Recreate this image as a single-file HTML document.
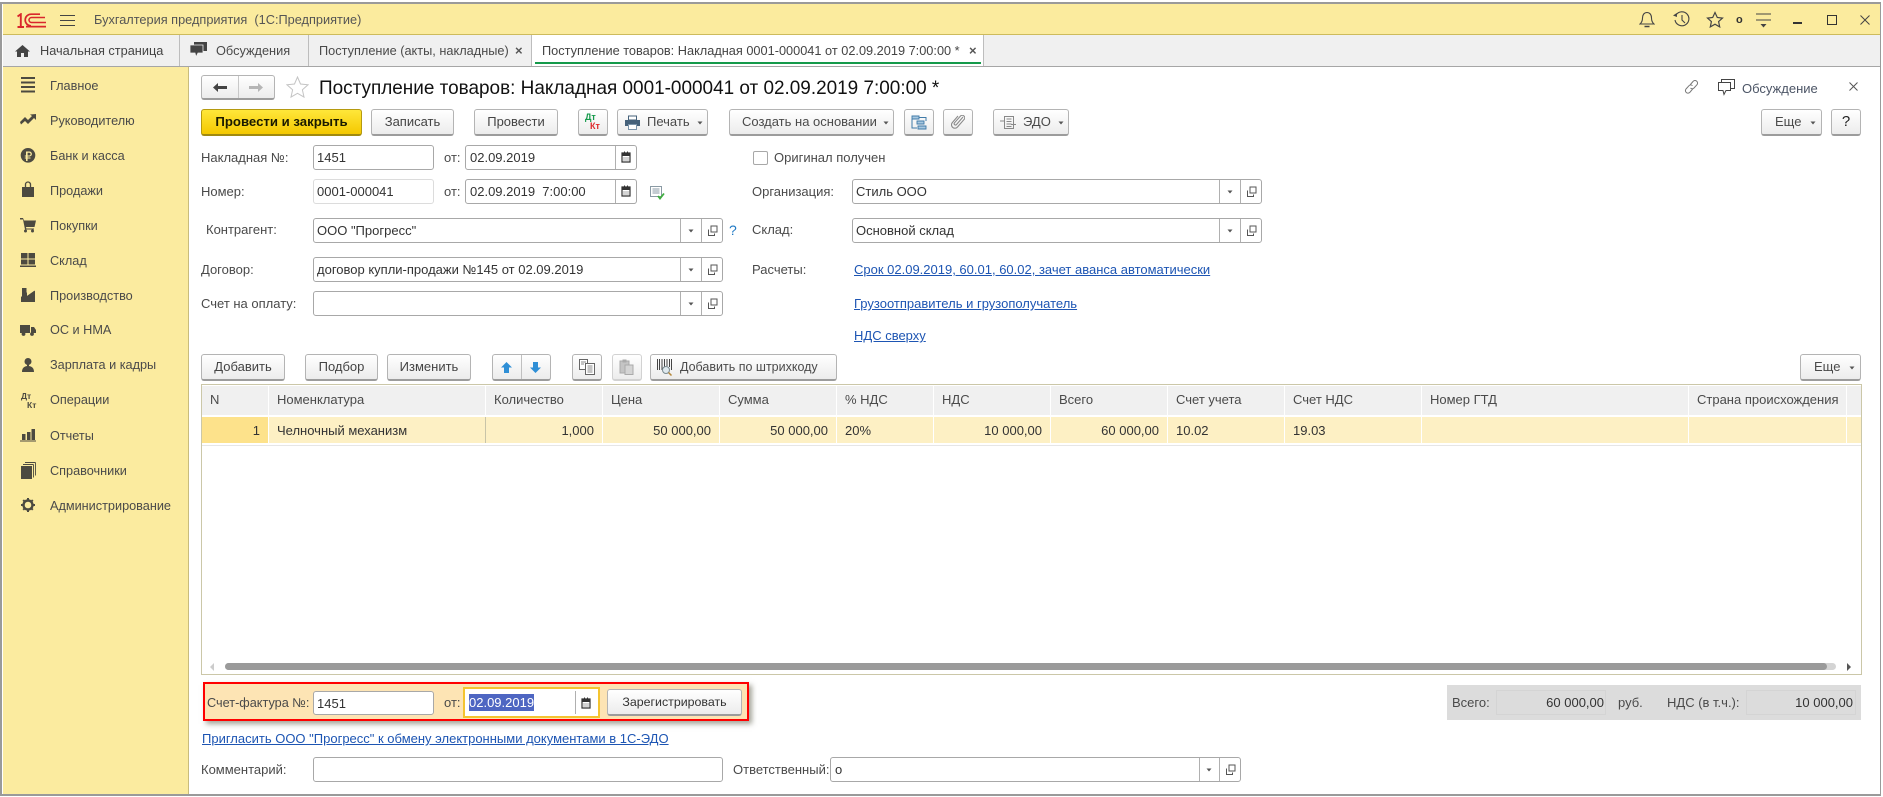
<!DOCTYPE html>
<html lang="ru"><head><meta charset="utf-8"><title>Поступление товаров</title>
<style>
html,body{margin:0;padding:0;background:#fff}
#p{position:relative;width:1883px;height:797px;overflow:hidden;background:#fff;font:13px/20px "Liberation Sans",Arial,sans-serif;color:#4a4a4a}
#p div,#p a,#p svg{position:absolute;box-sizing:border-box}
.t{white-space:pre;height:20px}
.s{font-size:12.7px}
.tb{font-size:12.75px}
.r{text-align:right;transform:translateX(-100%)}
.b{background:linear-gradient(#fff,#ececec);border:1px solid #b4b4b4;border-bottom:2px solid #9c9c9c;border-radius:3px;text-align:center;line-height:23px;white-space:pre;color:#444}
.i{background:#fff;border:1px solid #a8a8a8;border-radius:3px;height:25px;color:#333;line-height:24px;padding-left:3px;white-space:pre}
.v{width:1px;background:#b0b0b0}
a.l{color:#1d55b3;text-decoration:underline;white-space:pre;line-height:20px;height:20px}
.h{background:#f0f0f0;height:29px;top:386px;line-height:28px;padding-left:9px;color:#4a4a4a;white-space:pre;overflow:hidden}
.c{background:#fdf0c4;height:26px;top:417px;line-height:28px;color:#333;white-space:pre}
</style></head><body><div id="p">
<svg width="0" height="0" style="display:none">
<symbol id="cal" viewBox="0 0 10 12"><path d="M1 2h8v9H1z" fill="none" stroke="#333" stroke-width="1.2"/><path d="M1 2h8v3H1zM3 .5h1v2H3zM6 .5h1v2H6z" fill="#333"/><path d="M2.500 6.500h1v1h-1zM4.500 6.500h1v1h-1zM6.500 6.500h1v1h-1zM2.500 8.500h1v1h-1zM4.500 8.500h1v1h-1zM6.500 8.500h1v1h-1z" fill="#555"/></symbol>
<symbol id="tri" viewBox="0 0 6 4"><path d="M.5 .5h5L3 3.500z" fill="#555"/></symbol>
<symbol id="op" viewBox="0 0 11 12"><path d="M4 1h6v6H4z" fill="#fff" stroke="#555"/><path d="M1.500 4.500v6h6V8.500" fill="none" stroke="#555"/></symbol>
</svg>

<!-- window frame -->
<div style="left:0;top:2px;width:1881px;height:794px;border:2px solid #9a9a9a;border-right-width:1px"></div>

<!-- title bar -->
<div style="left:3px;top:4px;width:1877px;height:31px;background:#fbeb9e;border-bottom:1px solid #cdbb5c"></div>
<svg style="left:17px;top:13px" width="30" height="15" viewBox="0 0 30 15"><g fill="none" stroke="#d9262c"><path d="M.5 3.500 3.800 1.200V14M.5 14H7" stroke-width="1.900"/><path d="M23 1.200H14a5.800 5.800 0 0 0 0 11.600" stroke-width="1.700"/><path d="M28 4.500H14.500a2.500 2.500 0 0 0 0 5H29" stroke-width="1.500"/><path d="M9 13.600H29" stroke-width="1.700"/></g></svg>
<svg style="left:60px;top:15px" width="15" height="11"><path d="M0 .5h15M0 5.500h15M0 10.500h15" stroke="#444"/></svg>
<div class="t tb" style="left:94px;top:10px;color:#555">Бухгалтерия предприятия  (1С:Предприятие)</div>
<svg style="left:1639px;top:11px" width="16" height="18" viewBox="0 0 16 18"><path d="M8 1.500c-3 0-4.500 2.500-4.500 5.500 0 3-1.300 5-2.500 6h14c-1.200-1-2.500-3-2.500-6 0-3-1.500-5.500-4.500-5.500z" fill="none" stroke="#444" stroke-width="1.100"/><path d="M5.500 15.500h5" stroke="#444" stroke-width="1.500"/></svg>
<svg style="left:1672px;top:11px" width="19" height="17" viewBox="0 0 19 17"><path d="M4 4a7 7 0 1 1-1 5" fill="none" stroke="#444" stroke-width="1.100"/><path d="M1 4.500 4.800 2 5 6z" fill="#444"/><path d="M10 4v5l3 3" fill="none" stroke="#444" stroke-width="1.100"/></svg>
<svg style="left:1706px;top:11px" width="18" height="17" viewBox="0 0 18 17"><path d="M9 1.500l2.300 5 5.200.6-3.900 3.500 1.100 5.300L9 13.200l-4.700 2.700 1.100-5.300L1.500 7.100l5.200-.6z" fill="none" stroke="#444" stroke-width="1.200"/></svg>
<div class="t" style="left:1736px;top:10px;font-size:11px;color:#333;font-weight:bold">о</div>
<svg style="left:1756px;top:13px" width="15" height="15" viewBox="0 0 15 15"><path d="M0 1h15M0 7h15" stroke="#444"/><path d="M4.500 11h6L7.500 14.500z" fill="#444"/></svg>
<div style="left:1793px;top:22px;width:9px;height:2px;background:#333"></div>
<div style="left:1827px;top:15px;width:10px;height:10px;border:1.500px solid #333"></div>
<svg style="left:1860px;top:15px" width="10" height="10"><path d="M.5 .5l9 9M9.500 .5l-9 9" stroke="#444"/></svg>

<!-- tab bar -->
<div style="left:3px;top:35px;width:1877px;height:32px;background:#f0f0f0;border-bottom:1px solid #a6a6a6"></div>
<div style="left:179px;top:35px;width:1px;height:31px;background:#bdbdbd"></div>
<div style="left:308px;top:35px;width:1px;height:31px;background:#bdbdbd"></div>
<div style="left:531px;top:35px;width:1px;height:31px;background:#bdbdbd"></div>
<div style="left:532px;top:35px;width:452px;height:31px;background:#fff;border-right:1px solid #bdbdbd"></div>
<div style="left:535px;top:62px;width:446px;height:2px;background:#159a4b"></div>
<svg style="left:15px;top:45px" width="15" height="12" viewBox="0 0 15 12"><path d="M7.500 0 15 6.500h-2V12H9V8H6v4H2V6.500H0z" fill="#444"/></svg>
<div class="t tb" style="left:40px;top:41px;color:#444">Начальная страница</div>
<svg style="left:190px;top:42px" width="17" height="16" viewBox="0 0 17 16"><path d="M4 0h13v9H4z" fill="#444"/><path d="M0 3h13v8H8l-2 4-1-4H0z" fill="#444" stroke="#f0f0f0" stroke-width=".8"/></svg>
<div class="t tb" style="left:216px;top:41px">Обсуждения</div>
<div class="t tb" style="left:319px;top:41px">Поступление (акты, накладные)</div>
<div class="t" style="left:515px;top:41px;font-weight:bold;font-size:13px;color:#555">×</div>
<div class="t tb" style="left:542px;top:41px;color:#444">Поступление товаров: Накладная 0001-000041 от 02.09.2019 7:00:00 *</div>
<div class="t" style="left:969px;top:41px;font-weight:bold;font-size:13px;color:#555">×</div>

<!-- sidebar -->
<div style="left:3px;top:67px;width:186px;height:727px;background:#fbeb9f;border-right:1px solid #c9bc7c"></div>
<div class="t s" style="left:50px;top:76px">Главное</div>
<div class="t s" style="left:50px;top:111px">Руководителю</div>
<div class="t s" style="left:50px;top:146px">Банк и касса</div>
<div class="t s" style="left:50px;top:181px">Продажи</div>
<div class="t s" style="left:50px;top:216px">Покупки</div>
<div class="t s" style="left:50px;top:251px">Склад</div>
<div class="t s" style="left:50px;top:286px">Производство</div>
<div class="t s" style="left:50px;top:320px">ОС и НМА</div>
<div class="t s" style="left:50px;top:355px">Зарплата и кадры</div>
<div class="t s" style="left:50px;top:390px">Операции</div>
<div class="t s" style="left:50px;top:426px">Отчеты</div>
<div class="t s" style="left:50px;top:461px">Справочники</div>
<div class="t s" style="left:50px;top:496px">Администрирование</div>
<svg style="left:20px;top:76px" width="16" height="450" viewBox="0 0 16 450" fill="#4c4a40">
<!-- lines -->
<path d="M1 1h14v2H1zM1 5.500h14v2H1zM1 10h14v2H1zM1 14.500h14v2H1z"/>
<!-- trend -->
<path d="M0 46l5-5 3 3 4-4-2-1.500 6-.5v6l-2-2-6 6-3-3-4 3.500z"/>
<!-- ruble -->
<path fill-rule="evenodd" d="M8 72a7.300 7.300 0 1 1 0 14.600A7.300 7.300 0 0 1 8 72zM6 75.500v4H4.800v1H6v1H4.800v1H6v2.500h1.600v-2.500H10.500v-1H7.600v-1H9.400a2.500 2.500 0 0 0 0-5zM7.600 76.800H9.200a1.200 1.200 0 0 1 0 2.700H7.600z"/>
<!-- bag -->
<path d="M2 111h12v10H2z"/><path d="M5.500 112v-3.500a2.500 2.500 0 0 1 5 0v3.500" fill="none" stroke="#4c4a40" stroke-width="1.300"/>
<!-- cart -->
<path d="M0 142h3l1 2.500h12l-1.500 6.500H6l.3 1.500H14v1H5l-2-10H0z"/><circle cx="5.500" cy="155" r="1.500"/><circle cx="12.500" cy="155" r="1.500"/>
<!-- warehouse -->
<path d="M1 177h6.500v5.500H1zM8.500 177H15v5.500H8.500zM1 183.500h6.500v5H1zM8.500 183.500H15v5H8.500zM0 189.500h16v1.500H0z"/>
<!-- factory -->
<path d="M2 212h4.500v6L2 221zM1 226v-5l6-4.500v3.500l7-5v1l1 0v10z"/><path d="M1 221l6-4.500v3.500l8-5.500V226H1z"/>
<!-- truck -->
<path d="M0 249h10v8H0zM11 251h3l2 3v3H11z"/><circle cx="3.500" cy="258" r="1.900"/><circle cx="12" cy="258" r="1.900"/>
<!-- person -->
<circle cx="8" cy="285.500" r="3.500"/><path d="M7 288h2v2c3 .5 5 2 5 6H2c0-4 2-5.500 5-6z"/>
<!-- chart -->
<path d="M2 358h3.500v6H2zM7 356h3.500v8H7zM11.500 353h3.500v11h-3.500zM0 364.500h16v1H0z"/>
<!-- books -->
<path d="M1 390h11v13H1z"/><path d="M13.500 388.500v13M15.500 386.500v13M3 388.500h10.500M5 386.500h10.500" fill="none" stroke="#4c4a40" stroke-width=".9"/>
<!-- gear -->
<g transform="translate(8 429)"><circle r="4.500" fill="none" stroke="#4c4a40" stroke-width="2.400"/><path d="M-1 -7h2v3h-2zM-1 4h2v3h-2zM-7 -1h3v2h-3zM4 -1h3v2H4zM-5.500 -4.200l1.400-1.400 2 2-1.400 1.400zM2.100 3.500l1.400-1.400 2 2-1.400 1.400zM4.100 -5.600l1.400 1.400-2 2-1.400-1.400zM-3.500 2.100l1.400 1.400-2 2-1.400-1.400z"/></g>
</svg>
<div class="t" style="left:21px;top:391px;font-size:8.500px;font-weight:bold;line-height:10px;color:#4c4a40;height:10px">Дт</div>
<div class="t" style="left:27px;top:400px;font-size:8.500px;font-weight:bold;line-height:10px;color:#4c4a40;height:10px">Кт</div>

<!-- nav and title -->
<div class="b" style="left:201px;top:75px;width:74px;height:25px"></div>
<div style="left:238px;top:76px;width:1px;height:22px;background:#c8c8c8"></div>
<svg style="left:213px;top:83px" width="14" height="9"><path d="M0 4.500L5 0v3h9v3H5v3z" fill="#444"/></svg>
<svg style="left:249px;top:83px" width="14" height="9"><path d="M14 4.500L9 0v3H0v3h9v3z" fill="#b5b5b5"/></svg>
<svg style="left:286px;top:76px" width="23" height="22" viewBox="0 0 23 22"><path d="M11.500 1l3 7 7.500.8-5.600 5 1.600 7.300-6.500-3.800-6.500 3.800 1.600-7.300-5.600-5L8.500 8z" fill="#fff" stroke="#c4c4c4"/></svg>
<div class="t" style="left:319px;top:78px;font-size:18.950px;color:#111;line-height:22px;height:22px">Поступление товаров: Накладная 0001-000041 от 02.09.2019 7:00:00 *</div>
<svg style="left:1683px;top:79px" width="17" height="16" viewBox="0 0 17 16"><g fill="none" stroke="#777" stroke-width="1"><path d="M7 6l3-3.500a2.500 2.500 0 0 1 4 3.200l-3 3.300a2.500 2.500 0 0 1-3.500 0"/><path d="M10 9.500l-3 3.700a2.500 2.500 0 0 1-4-3.200l3-3.300a2.500 2.500 0 0 1 3.500 0"/></g></svg>
<svg style="left:1718px;top:79px" width="17" height="17" viewBox="0 0 17 17"><g fill="none" stroke="#444"><path d="M3.500 3V.5h13v9H13"/><path d="M.5 3.500h12v8H8l-2 4-1-4H.5z" fill="#fff"/></g></svg>
<div class="t" style="left:1742px;top:79px;color:#4c5566">Обсуждение</div>
<svg style="left:1849px;top:82px" width="9" height="9"><path d="M.5 .5l8 8M8.500 .5l-8 8" stroke="#555"/></svg>

<!-- command bar -->
<div class="b" style="left:201px;top:109px;width:161px;height:27px;background:linear-gradient(#ffe73a,#f4c800);border:1px solid #b59a10;border-bottom:2px solid #a08a10;font-weight:bold;color:#1a1a00;line-height:24px;font-size:13.200px">Провести и закрыть</div>
<div class="b" style="left:371px;top:109px;width:83px;height:27px;line-height:24px">Записать</div>
<div class="b" style="left:474px;top:109px;width:84px;height:27px;line-height:24px">Провести</div>
<div class="b" style="left:578px;top:109px;width:30px;height:27px"></div>
<div class="t" style="left:585px;top:113px;font-size:9px;font-weight:bold;color:#159a4b;line-height:9px;height:9px">Дт</div>
<div class="t" style="left:590px;top:122px;font-size:9px;font-weight:bold;color:#dd2b2b;line-height:9px;height:9px">Кт</div>
<div class="b" style="left:617px;top:109px;width:91px;height:27px"></div>
<svg style="left:625px;top:115px" width="15" height="15" viewBox="0 0 15 15"><path d="M3.500 1h8v4h-8z" fill="#fff" stroke="#45617a"/><path d="M0 5h15v6h-3V9H3v2H0z" fill="#45617a"/><path d="M3.500 9.500h8v5h-8z" fill="#fff" stroke="#7b94aa"/></svg>
<div class="t" style="left:647px;top:112px">Печать</div>
<svg style="left:697px;top:121px" width="6" height="4"><use href="#tri"/></svg>
<div class="b" style="left:729px;top:109px;width:165px;height:27px"></div>
<div class="t" style="left:742px;top:112px">Создать на основании</div>
<svg style="left:883px;top:121px" width="6" height="4"><use href="#tri"/></svg>
<div class="b" style="left:904px;top:109px;width:30px;height:27px"></div>
<svg style="left:911px;top:115px" width="16" height="15" viewBox="0 0 16 15"><g fill="#a8c8e0" stroke="#3f7aa8" stroke-width=".9"><path d="M1 1h7v3H1zM6 6h7v3H6zM7 11h8v3H7z"/></g><path d="M8 2.500h7V6M1 4v9h5" fill="none" stroke="#3f7aa8"/></svg>
<div class="b" style="left:943px;top:109px;width:30px;height:27px"></div>
<svg style="left:951px;top:115px" width="14" height="14" viewBox="0 0 14 14"><path d="M12 2 5.500 9.500a1.300 1.300 0 0 1-2-1.700L9.500 1a2.500 2.500 0 0 1 3.800 3.200L6.500 12a3.400 3.400 0 0 1-5.200-4.400L7 1" fill="none" stroke="#8a8a8a" stroke-width="1.100"/></svg>
<div class="b" style="left:993px;top:109px;width:76px;height:27px"></div>
<svg style="left:1000px;top:115px" width="16" height="15" viewBox="0 0 16 15"><g fill="none" stroke="#888"><path d="M4.500 1.500h9v12h-9zM6.500 4h5M6.500 6.500h5M6.500 9h5M6.500 11.500h5"/><path d="M0 6h4M11 9.500h5"/></g></svg>
<div class="t" style="left:1023px;top:112px">ЭДО</div>
<svg style="left:1058px;top:121px" width="6" height="4"><use href="#tri"/></svg>
<div class="b" style="left:1761px;top:109px;width:61px;height:27px"></div>
<div class="t" style="left:1775px;top:112px">Еще</div>
<svg style="left:1810px;top:121px" width="6" height="4"><use href="#tri"/></svg>
<div class="b" style="left:1831px;top:109px;width:30px;height:27px;line-height:24px;color:#222;font-size:15px">?</div>

<!-- form left -->
<div class="t" style="left:201px;top:148px">Накладная №:</div>
<div class="i" style="left:313px;top:145px;width:121px">1451</div>
<div class="t" style="left:444px;top:148px">от:</div>
<div class="i" style="left:465px;top:145px;width:172px;padding-left:4px">02.09.2019</div>
<div class="v" style="left:615px;top:146px;height:23px"></div>
<svg style="left:621px;top:151px" width="10" height="12"><use href="#cal"/></svg>

<div class="t" style="left:201px;top:182px">Номер:</div>
<div class="i" style="left:313px;top:179px;width:121px;border-color:#dcdcdc">0001-000041</div>
<div class="t" style="left:444px;top:182px">от:</div>
<div class="i" style="left:465px;top:179px;width:172px;padding-left:4px">02.09.2019  7:00:00</div>
<div class="v" style="left:615px;top:180px;height:23px"></div>
<svg style="left:621px;top:185px" width="10" height="12"><use href="#cal"/></svg>
<svg style="left:650px;top:186px" width="16" height="14" viewBox="0 0 16 14"><path d="M.5 .5h11v10H.5z" fill="#fff" stroke="#8a9aa4"/><path d="M2.500 3h7M2.500 5h7M2.500 7h7" stroke="#8a9aa4"/><path d="M8 10l2 2.500 4-5" fill="none" stroke="#3fae3f" stroke-width="1.800"/></svg>

<div class="t" style="left:206px;top:220px">Контрагент:</div>
<div class="i" style="left:313px;top:218px;width:410px">ООО "Прогресс"</div>
<div class="v" style="left:680px;top:219px;height:23px"></div><div class="v" style="left:701px;top:219px;height:23px"></div>
<svg style="left:688px;top:229px" width="6" height="4"><use href="#tri"/></svg>
<svg style="left:707px;top:225px" width="11" height="12"><use href="#op"/></svg>
<div class="t" style="left:729px;top:220px;color:#1f79c4;font-size:14px">?</div>

<div class="t" style="left:201px;top:260px">Договор:</div>
<div class="i" style="left:313px;top:257px;width:410px">договор купли-продажи №145 от 02.09.2019</div>
<div class="v" style="left:680px;top:258px;height:23px"></div><div class="v" style="left:701px;top:258px;height:23px"></div>
<svg style="left:688px;top:268px" width="6" height="4"><use href="#tri"/></svg>
<svg style="left:707px;top:264px" width="11" height="12"><use href="#op"/></svg>

<div class="t" style="left:201px;top:294px">Счет на оплату:</div>
<div class="i" style="left:313px;top:291px;width:410px"></div>
<div class="v" style="left:680px;top:292px;height:23px"></div><div class="v" style="left:701px;top:292px;height:23px"></div>
<svg style="left:688px;top:302px" width="6" height="4"><use href="#tri"/></svg>
<svg style="left:707px;top:298px" width="11" height="12"><use href="#op"/></svg>

<!-- form right -->
<div style="left:753px;top:151px;width:15px;height:14px;background:#fff;border:1px solid #a8a8a8;border-radius:2px"></div>
<div class="t" style="left:774px;top:148px">Оригинал получен</div>
<div class="t" style="left:752px;top:182px">Организация:</div>
<div class="i" style="left:852px;top:179px;width:410px">Стиль ООО</div>
<div class="v" style="left:1219px;top:180px;height:23px"></div><div class="v" style="left:1240px;top:180px;height:23px"></div>
<svg style="left:1227px;top:190px" width="6" height="4"><use href="#tri"/></svg>
<svg style="left:1246px;top:186px" width="11" height="12"><use href="#op"/></svg>
<div class="t" style="left:752px;top:220px">Склад:</div>
<div class="i" style="left:852px;top:218px;width:410px">Основной склад</div>
<div class="v" style="left:1219px;top:219px;height:23px"></div><div class="v" style="left:1240px;top:219px;height:23px"></div>
<svg style="left:1227px;top:229px" width="6" height="4"><use href="#tri"/></svg>
<svg style="left:1246px;top:225px" width="11" height="12"><use href="#op"/></svg>
<div class="t" style="left:752px;top:260px">Расчеты:</div>
<a class="l" style="left:854px;top:260px">Срок 02.09.2019, 60.01, 60.02, зачет аванса автоматически</a>
<a class="l" style="left:854px;top:294px">Грузоотправитель и грузополучатель</a>
<a class="l" style="left:854px;top:326px">НДС сверху</a>

<!-- table toolbar -->
<div class="b" style="left:201px;top:354px;width:84px;height:27px;line-height:24px">Добавить</div>
<div class="b" style="left:305px;top:354px;width:73px;height:27px;line-height:24px">Подбор</div>
<div class="b" style="left:387px;top:354px;width:84px;height:27px;line-height:24px">Изменить</div>
<div class="b" style="left:492px;top:354px;width:59px;height:27px"></div>
<div style="left:521px;top:355px;width:1px;height:24px;background:#c0c0c0"></div>
<svg style="left:501px;top:362px" width="11" height="11" viewBox="0 0 11 11"><path d="M5.500 0 11 5.500H8V11H3V5.500H0z" fill="#2f8fd6"/></svg>
<svg style="left:530px;top:362px" width="11" height="11" viewBox="0 0 11 11"><path d="M5.500 11 11 5.500H8V0H3v5.500H0z" fill="#2f8fd6"/></svg>
<div class="b" style="left:572px;top:354px;width:30px;height:27px"></div>
<svg style="left:579px;top:359px" width="16" height="16" viewBox="0 0 16 16"><path d="M.5 .5h8v10h-8z" fill="#fff" stroke="#666"/><path d="M6.500 4.500h9v11h-9z" fill="#fff" stroke="#666"/><path d="M2 3h5M2 5h3M8.500 7h5M8.500 9h5M8.500 11h5M8.500 13h5" stroke="#888"/></svg>
<div class="b" style="left:612px;top:354px;width:30px;height:27px;border-color:#d2d2d2"></div>
<svg style="left:619px;top:359px" width="15" height="16" viewBox="0 0 15 16"><path d="M1 2h9v12H1z" fill="#c4c4c4" stroke="#aaa"/><path d="M3.500 .5h4v3h-4z" fill="#aaa"/><path d="M6 6h8v9.500H6z" fill="#d4d4d4" stroke="#aaa"/></svg>
<div class="b" style="left:650px;top:354px;width:187px;height:27px"></div>
<svg style="left:657px;top:358px" width="16" height="18" viewBox="0 0 16 18"><path d="M.5 1v11M2.500 1v11M5 1v11M7.500 1v8M10 1v7M12.500 1v8M14.500 1v11" stroke="#444"/><circle cx="9" cy="12" r="3.500" fill="#dfe9ee" stroke="#7a8a90"/><path d="M11.500 14.500l3 3" stroke="#b5883a" stroke-width="1.500"/></svg>
<div class="t" style="left:680px;top:357px;font-size:12.500px">Добавить по штрихкоду</div>
<div class="b" style="left:1800px;top:354px;width:61px;height:27px"></div>
<div class="t" style="left:1814px;top:357px">Еще</div>
<svg style="left:1849px;top:366px" width="6" height="4"><use href="#tri"/></svg>

<!-- table -->
<div style="left:201px;top:384px;width:1661px;height:291px;border:1px solid #cbc7a8;background:#fff"></div>
<div style="left:202px;top:445px;width:1659px;height:1px;background:#e6e6e6"></div>
<div class="h" style="left:202px;width:66px;padding-left:8px">N</div>
<div class="h" style="left:269px;width:216px;padding-left:8px">Номенклатура</div>
<div class="h" style="left:486px;width:116px;padding-left:8px">Количество</div>
<div class="h" style="left:603px;width:116px;padding-left:8px">Цена</div>
<div class="h" style="left:720px;width:116px;padding-left:8px">Сумма</div>
<div class="h" style="left:837px;width:96px;padding-left:8px">% НДС</div>
<div class="h" style="left:934px;width:116px;padding-left:8px">НДС</div>
<div class="h" style="left:1051px;width:116px;padding-left:8px">Всего</div>
<div class="h" style="left:1168px;width:116px;padding-left:8px">Счет учета</div>
<div class="h" style="left:1285px;width:136px;padding-left:8px">Счет НДС</div>
<div class="h" style="left:1422px;width:266px;padding-left:8px">Номер ГТД</div>
<div class="h" style="left:1689px;width:157px;padding-left:8px">Страна происхождения</div>
<div class="h" style="left:1847px;width:14px"></div>
<div class="c" style="left:202px;width:66px;background:#fde28b;text-align:right;padding-right:8px">1</div>
<div class="c" style="left:269px;width:216px;padding-left:8px">Челночный механизм</div>
<div style="left:485px;top:417px;width:1px;height:26px;background:#c8c4a8"></div>
<div class="c" style="left:486px;width:116px;text-align:right;padding-right:8px">1,000</div>
<div class="c" style="left:603px;width:116px;text-align:right;padding-right:8px">50 000,00</div>
<div class="c" style="left:720px;width:116px;text-align:right;padding-right:8px">50 000,00</div>
<div class="c" style="left:837px;width:96px;padding-left:8px">20%</div>
<div class="c" style="left:934px;width:116px;text-align:right;padding-right:8px">10 000,00</div>
<div class="c" style="left:1051px;width:116px;text-align:right;padding-right:8px">60 000,00</div>
<div class="c" style="left:1168px;width:116px;padding-left:8px">10.02</div>
<div class="c" style="left:1285px;width:136px;padding-left:8px">19.03</div>
<div class="c" style="left:1422px;width:266px"></div>
<div class="c" style="left:1689px;width:157px"></div>
<div class="c" style="left:1847px;width:14px"></div>
<!-- scrollbar -->
<svg style="left:210px;top:663px" width="5" height="8"><path d="M4 0v8L0 4z" fill="#ccc"/></svg>
<div style="left:225px;top:663px;width:1611px;height:7px;background:#d4d4d4;border-radius:4px"></div>
<div style="left:225px;top:663px;width:1602px;height:7px;background:#9a9a9a;border-radius:4px"></div>
<svg style="left:1847px;top:663px" width="5" height="8"><path d="M0 0v8l4-4z" fill="#555"/></svg>

<!-- highlighted box -->
<div style="left:203px;top:682px;width:546px;height:39px;background:#fde4b4;border:2px solid #f00;box-shadow:3px 3px 5px rgba(90,90,70,.55)"></div>
<div class="t" style="left:207px;top:693px;font-size:12.700px">Счет-фактура №:</div>
<div class="i" style="left:313px;top:691px;width:121px;height:24px;line-height:23px">1451</div>
<div class="t" style="left:444px;top:693px">от:</div>
<div style="left:463px;top:687px;width:137px;height:31px;border:2px solid #f4c430;background:#fff"></div>
<div class="v" style="left:575px;top:691px;height:23px"></div>
<div class="t" style="left:469px;top:694px;background:#4e66c2;color:#fff;height:17px;line-height:17px">02.09.2019</div>
<svg style="left:581px;top:697px" width="10" height="12"><use href="#cal"/></svg>
<div class="b" style="left:607px;top:689px;width:135px;height:27px;line-height:24px;color:#333;font-size:12.400px">Зарегистрировать</div>

<!-- totals -->
<div style="left:1447px;top:685px;width:414px;height:35px;background:#dcdcdc"></div>
<div class="t" style="left:1452px;top:693px">Всего:</div>
<div style="left:1496px;top:690px;width:110px;height:25px;border:1px solid #d4d4d4"></div>
<div class="t r" style="left:1604px;top:693px;color:#333">60 000,00</div>
<div class="t" style="left:1618px;top:693px">руб.</div>
<div class="t" style="left:1667px;top:693px">НДС (в т.ч.):</div>
<div style="left:1746px;top:690px;width:110px;height:25px;border:1px solid #d4d4d4"></div>
<div class="t r" style="left:1853px;top:693px;color:#333">10 000,00</div>

<!-- bottom -->
<a class="l" style="left:202px;top:729px">Пригласить ООО "Прогресс" к обмену электронными документами в 1С-ЭДО</a>
<div class="t" style="left:201px;top:760px">Комментарий:</div>
<div class="i" style="left:313px;top:757px;width:410px"></div>
<div class="t" style="left:733px;top:760px">Ответственный:</div>
<div class="i" style="left:830px;top:757px;width:411px;padding-left:4px">о</div>
<div class="v" style="left:1199px;top:758px;height:23px"></div><div class="v" style="left:1219px;top:758px;height:23px"></div>
<svg style="left:1206px;top:768px" width="6" height="4"><use href="#tri"/></svg>
<svg style="left:1225px;top:764px" width="11" height="12"><use href="#op"/></svg>
</div></body></html>
